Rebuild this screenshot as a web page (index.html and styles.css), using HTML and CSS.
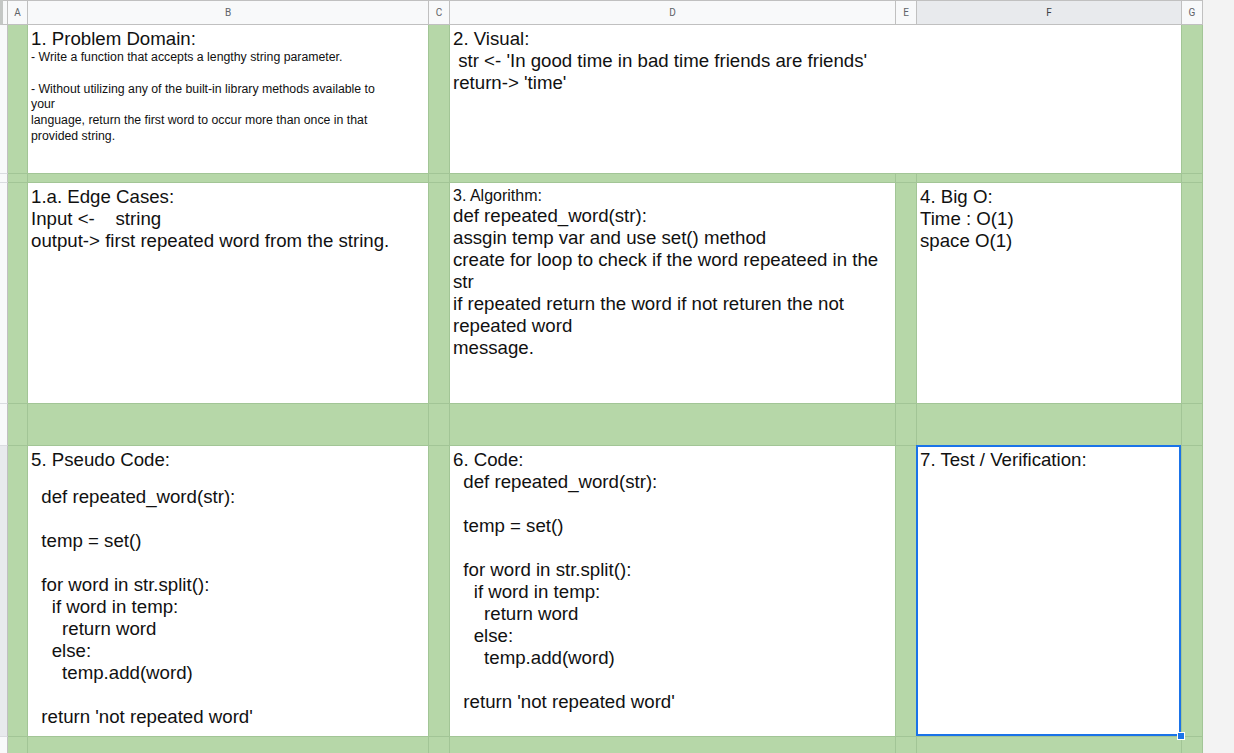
FILE: index.html
```html
<!DOCTYPE html>
<html>
<head>
<meta charset="utf-8">
<link rel="stylesheet" href="styles.css">
</head>
<body>
<div class="sheet">
  <!-- header row -->
  <div class="corner"></div>
  <div class="ch">A</div>
  <div class="ch">B</div>
  <div class="ch">C</div>
  <div class="ch">D</div>
  <div class="ch">E</div>
  <div class="ch on">F</div>
  <div class="ch">G</div>

  <!-- row 1 -->
  <div class="rh"></div>
  <div class="g"></div>
  <div class="w">
    <div class="l">1. Problem Domain:</div>
    <div class="s">- Write a function that accepts a lengthy string parameter.</div>
    <div class="s"> </div>
    <div class="s">- Without utilizing any of the built-in library methods available to</div>
    <div class="s">your</div>
    <div class="s">language, return the first word to occur more than once in that</div>
    <div class="s">provided string.</div>
  </div>
  <div class="g"></div>
  <div class="w span3">
    <div class="l">2. Visual:</div>
    <div class="l"> str &lt;- 'In good time in bad time friends are friends'</div>
    <div class="l">return-&gt; 'time'</div>
  </div>
  <div class="g"></div>

  <!-- row 2 -->
  <div class="rh"></div>
  <div class="g"></div><div class="g"></div><div class="g"></div><div class="g"></div><div class="g"></div><div class="g"></div><div class="g"></div>

  <!-- row 3 -->
  <div class="rh"></div>
  <div class="g"></div>
  <div class="w">
    <div class="l">1.a. Edge Cases:</div>
    <div class="l">Input &lt;-    string</div>
    <div class="l">output-&gt; first repeated word from the string.</div>
  </div>
  <div class="g"></div>
  <div class="w">
    <div class="m">3. Algorithm:</div>
    <div class="l">def repeated_word(str):</div>
    <div class="l">assgin temp var and use set() method</div>
    <div class="l">create for loop to check if the word repeateed in the</div>
    <div class="l">str</div>
    <div class="l">if repeated return the word if not returen the not</div>
    <div class="l">repeated word</div>
    <div class="l">message.</div>
  </div>
  <div class="g"></div>
  <div class="w">
    <div class="l">4. Big O:</div>
    <div class="l">Time : O(1)</div>
    <div class="l">space O(1)</div>
  </div>
  <div class="g"></div>

  <!-- row 4 -->
  <div class="rh"></div>
  <div class="g"></div><div class="g"></div><div class="g"></div><div class="g"></div><div class="g"></div><div class="g"></div><div class="g"></div>

  <!-- row 5 -->
  <div class="rh on"></div>
  <div class="g"></div>
  <div class="w">
    <div class="l">5. Pseudo Code:</div>
    <div class="gap"></div>
    <div class="l">  def repeated_word(str):</div>
    <div class="l"> </div>
    <div class="l">  temp = set()</div>
    <div class="l"> </div>
    <div class="l">  for word in str.split():</div>
    <div class="l">    if word in temp:</div>
    <div class="l">      return word</div>
    <div class="l">    else:</div>
    <div class="l">      temp.add(word)</div>
    <div class="l"> </div>
    <div class="l">  return 'not repeated word'</div>
  </div>
  <div class="g"></div>
  <div class="w">
    <div class="l">6. Code:</div>
    <div class="l">  def repeated_word(str):</div>
    <div class="l"> </div>
    <div class="l">  temp = set()</div>
    <div class="l"> </div>
    <div class="l">  for word in str.split():</div>
    <div class="l">    if word in temp:</div>
    <div class="l">      return word</div>
    <div class="l">    else:</div>
    <div class="l">      temp.add(word)</div>
    <div class="l"> </div>
    <div class="l">  return 'not repeated word'</div>
  </div>
  <div class="g"></div>
  <div class="w sel">
    <div class="l">7. Test / Verification:</div>
    <div class="selbox"><span class="handle"></span></div>
  </div>
  <div class="g"></div>

  <!-- row 6 -->
  <div class="rh"></div>
  <div class="g"></div><div class="g"></div><div class="g"></div><div class="g"></div><div class="g"></div><div class="g"></div><div class="g"></div>
</div>
</body>
</html>
```

FILE: styles.css
```css
html, body {
  margin: 0;
  padding: 0;
  height: 100%;
  overflow: hidden;
  background: #f3f3f3;
}

.sheet {
  display: grid;
  grid-template-columns: 8px 20px 401px 21px 446px 21px 265px 21px;
  grid-template-rows: 25px 149px 9px 221px 42px 291px 40px;
  width: 1203px;
  font-family: "Liberation Sans", Arial, sans-serif;
  color: #111;
}

.sheet > div {
  box-sizing: border-box;
  border-right: 1px solid #a2c596;
  border-bottom: 1px solid #a2c596;
  overflow: hidden;
  min-width: 0;
}

.sheet > .corner {
  background: #f8f9fa;
  border-right: 1px solid #c0c0c0;
  border-bottom: 1px solid #c0c0c0;
  border-left: 3px solid #c4c7c5;
  box-shadow: inset 0 1px 0 #c0c0c0;
}

.sheet > .ch {
  background: #f8f9fa;
  border-right: 1px solid #c0c0c0;
  border-bottom: 1px solid #c0c0c0;
  box-shadow: inset 0 1px 0 #c0c0c0;
  display: flex;
  align-items: center;
  justify-content: center;
  font-family: Roboto, "Liberation Sans", sans-serif;
  font-size: 10px;
  color: #5f6368;
  padding-top: 1px;
}

.sheet > .ch.on {
  background: #e8eaed;
  color: #3c4043;
}

.sheet > .rh {
  background: #f8f9fa;
  border-right: 1px solid #c0c0c0;
  border-bottom: 1px solid #dadce0;
}

.sheet > .rh.on {
  background: #e8eaed;
}

.sheet > .g {
  background: #b6d7a8;
}

.sheet > .w {
  background: #fff;
  padding: 3px 3px 0 3px;
}

.sheet > .span3 {
  grid-column: span 3;
}

.l {
  font-size: 18.67px;
  line-height: 22px;
  height: 22px;
  white-space: pre;
}

.s {
  font-size: 12.3px;
  line-height: 15.8px;
  height: 15.8px;
  white-space: pre;
}

.m {
  font-size: 16px;
  line-height: 19px;
  height: 19px;
  white-space: pre;
}

.gap {
  height: 15px;
}

.sheet > .sel {
  position: relative;
  overflow: visible;
}

.selbox {
  position: absolute;
  top: -1px;
  left: -1px;
  right: 0;
  bottom: 0;
  border: 2px solid #1a73e8;
  pointer-events: none;
}

.handle {
  position: absolute;
  right: -6px;
  bottom: -6px;
  width: 6px;
  height: 6px;
  background: #1a73e8;
  border: 1px solid #fff;
}
```
